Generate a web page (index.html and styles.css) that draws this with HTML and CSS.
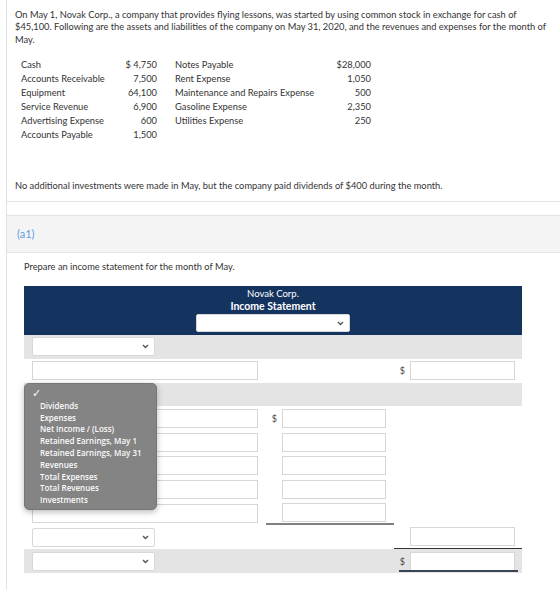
FILE: index.html
```html
<!DOCTYPE html>
<html lang="en">
<head>
  <meta charset="UTF-8" />
  <title>Novak Corp. - Income Statement</title>
  <link rel="stylesheet" href="styles.css">
</head>
<body>
<div class="page">

  <!-- problem text -->
  <div class="question">
    <p class="intro">On May 1, Novak Corp., a company that provides flying lessons, was started by using common stock in exchange for cash of $45,100. Following are the assets and liabilities of the company on May 31, 2020, and the revenues and expenses for the month of May.</p>

    <div class="balances">
      <span>Cash</span><span class="amt">$ 4,750</span><span class="name2">Notes Payable</span><span class="amt">$28,000</span>
      <span>Accounts Receivable</span><span class="amt">7,500</span><span class="name2">Rent Expense</span><span class="amt">1,050</span>
      <span>Equipment</span><span class="amt">64,100</span><span class="name2">Maintenance and Repairs Expense</span><span class="amt">500</span>
      <span>Service Revenue</span><span class="amt">6,900</span><span class="name2">Gasoline Expense</span><span class="amt">2,350</span>
      <span>Advertising Expense</span><span class="amt">600</span><span class="name2">Utilities Expense</span><span class="amt">250</span>
      <span>Accounts Payable</span><span class="amt">1,500</span><span></span><span></span>
    </div>

    <p class="note">No additional investments were made in May, but the company paid dividends of $400 during the month.</p>
  </div>

  <div class="part-head">(a1)</div>

  <div class="part-body">
    <p class="prompt">Prepare an income statement for the month of May.</p>

    <div class="statement">
      <div class="stmt-head">
        <div>Novak Corp.</div>
        <div class="title">Income Statement</div>
        <div class="select period">
          <svg width="7" height="5" viewBox="0 0 7 5"><path d="M1 1l2.5 2.5L6 1" fill="none" stroke="#555" stroke-width="1.4"/></svg>
        </div>
      </div>

      <div class="row shaded">
        <div class="c1"><div class="select"><svg width="7" height="5" viewBox="0 0 7 5"><path d="M1 1l2.5 2.5L6 1" fill="none" stroke="#555" stroke-width="1.4"/></svg></div></div>
        <div class="c2"></div>
        <div class="c3"></div>
      </div>
      <div class="row">
        <div class="c1"><input class="field wide" type="text"></div>
        <div class="c2"></div>
        <div class="c3"><span class="cur">$</span><input class="field" type="text"></div>
      </div>
      <div class="row shaded">
        <div class="c1"><div class="select"><svg width="7" height="5" viewBox="0 0 7 5"><path d="M1 1l2.5 2.5L6 1" fill="none" stroke="#555" stroke-width="1.4"/></svg></div></div>
        <div class="c2"></div>
        <div class="c3"></div>
      </div>
      <div class="row">
        <div class="c1"><input class="field wide" type="text"></div>
        <div class="c2"><span class="cur">$</span><input class="field" type="text"></div>
        <div class="c3"></div>
      </div>
      <div class="row">
        <div class="c1"><input class="field wide" type="text"></div>
        <div class="c2"><input class="field" type="text"></div>
        <div class="c3"></div>
      </div>
      <div class="row">
        <div class="c1"><input class="field wide" type="text"></div>
        <div class="c2"><input class="field" type="text"></div>
        <div class="c3"></div>
      </div>
      <div class="row">
        <div class="c1"><input class="field wide" type="text"></div>
        <div class="c2"><input class="field" type="text"></div>
        <div class="c3"></div>
      </div>
      <div class="row">
        <div class="c1"><input class="field wide" type="text"></div>
        <div class="c2 subtotal"><input class="field" type="text"></div>
        <div class="c3"></div>
      </div>
      <div class="row">
        <div class="c1"><div class="select"><svg width="7" height="5" viewBox="0 0 7 5"><path d="M1 1l2.5 2.5L6 1" fill="none" stroke="#555" stroke-width="1.4"/></svg></div></div>
        <div class="c2"></div>
        <div class="c3 total"><input class="field" type="text"></div>
      </div>
      <div class="row shaded">
        <div class="c1"><div class="select"><svg width="7" height="5" viewBox="0 0 7 5"><path d="M1 1l2.5 2.5L6 1" fill="none" stroke="#555" stroke-width="1.4"/></svg></div></div>
        <div class="c2"></div>
        <div class="c3 grand"><span class="cur">$</span><input class="field" type="text"></div>
      </div>

      <!-- open account-title list -->
      <ul class="menu">
        <li class="checked">&#10003;</li>
        <li>Dividends</li>
        <li>Expenses</li>
        <li>Net Income / (Loss)</li>
        <li>Retained Earnings, May 1</li>
        <li>Retained Earnings, May 31</li>
        <li>Revenues</li>
        <li>Total Expenses</li>
        <li>Total Revenues</li>
        <li>Investments</li>
      </ul>
    </div>
  </div>

</div>
</body>
</html>
```

FILE: styles.css
```css
html, body {
  margin: 0;
  padding: 0;
  background: #fff;
}

body {
  font-family: "Lato", "Open Sans", sans-serif;
  font-size: 9.3px;
  color: #333;
  overflow: hidden;
}

.page {
  margin-left: 6px;
  border-left: 1px solid #e2e2e2;
  min-height: 590px;
}

/* question panel */
.question {
  padding: 8.5px 11px 9px 8px;
  border-bottom: 1px solid #e4e4e4;
}

.intro {
  margin: 0;
  line-height: 12.5px;
}

.balances {
  display: grid;
  grid-template-columns: 100px 36px 168px 46px;
  margin: 12px 0 0 6px;
  line-height: 14px;
  white-space: nowrap;
}

.balances .amt {
  text-align: right;
}

.balances .name2 {
  padding-left: 18px;
}

.note {
  margin: 37.5px 0 0;
  line-height: 12.5px;
}

/* part header */
.part-head {
  margin-top: 13px;
  background: #f4f4f4;
  border-top: 1px solid #e4e4e4;
  border-bottom: 1px solid #e4e4e4;
  height: 36px;
  line-height: 35px;
  padding-left: 10px;
  font-size: 11px;
  color: #5a9de2;
}

.part-body {
  padding: 8px 0 0 17px;
}

.prompt {
  margin: 0 0 12.5px;
  line-height: 12.5px;
}

/* income statement */
.statement {
  position: relative;
  width: 498px;
}

.stmt-head {
  background: #15335f;
  color: #fff;
  text-align: center;
  font-size: 9.5px;
  padding: 2px 0 3px;
  line-height: 12px;
}

.stmt-head .title {
  font-weight: bold;
  font-size: 10.5px;
  line-height: 13px;
}

.select {
  box-sizing: border-box;
  width: 123px;
  height: 19px;
  background: #fff;
  border: 1px solid #d8d8d8;
  border-radius: 2px;
  display: flex;
  align-items: center;
  justify-content: flex-end;
  padding-right: 5px;
}

.select.period {
  width: 154px;
  height: 18px;
  margin: 1px auto 0;
}

.row {
  display: grid;
  grid-template-columns: 242px 128px 128px;
  height: 23.8px;
}

.row.shaded {
  background: #e4e4e4;
}

.row > div {
  display: flex;
  align-items: center;
  box-sizing: border-box;
}

.c1 {
  padding-left: 8px;
}

.c2 {
  justify-content: flex-end;
  padding-right: 8px;
}

.c3 {
  justify-content: flex-end;
  padding-right: 7px;
}

.field {
  box-sizing: border-box;
  height: 19px;
  width: 104px;
  margin: 0;
  padding: 0 4px;
  border: 1px solid #d6d6d6;
  background: #fff;
  font: inherit;
}

.c3 .field {
  width: 105px;
}

.field.wide {
  width: 226px;
}

.cur {
  font-size: 9px;
  color: #444;
  margin-right: 5px;
}

.subtotal {
  border-bottom: 2px solid #808080;
}

.total {
  border-bottom: 1.5px solid #333;
}

.grand {
  position: relative;
}

.grand::after {
  content: "";
  position: absolute;
  left: 5px;
  right: 4px;
  bottom: 1px;
  border-bottom: 2px solid #3a4656;
}

/* dropdown list */
.menu {
  position: absolute;
  left: 0;
  top: 97px;
  width: 133px;
  margin: 0;
  padding: 4px 0 3px;
  list-style: none;
  background: #848484;
  border: 1px solid #767676;
  border-radius: 5px;
  box-shadow: 0 2px 6px rgba(0, 0, 0, 0.28);
  box-sizing: border-box;
  font-family: "Open Sans", "Liberation Sans", sans-serif;
  font-weight: 600;
  font-size: 8px;
  line-height: 11.8px;
  color: #fafafa;
}

.menu li {
  padding-left: 15px;
}

.menu li.checked {
  padding-left: 7px;
  font-family: "DejaVu Sans", sans-serif;
  font-size: 11px;
  font-weight: normal;
}
```
